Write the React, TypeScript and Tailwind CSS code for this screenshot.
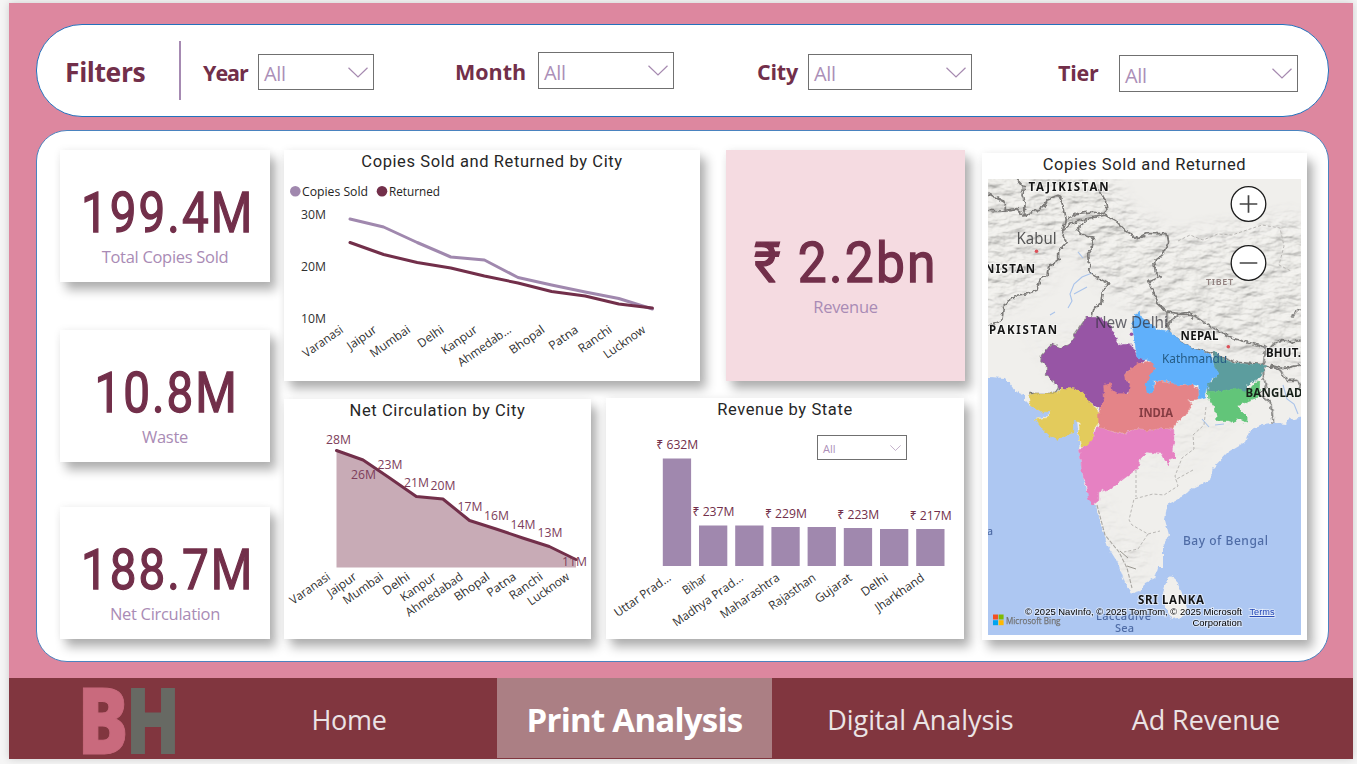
import React from "react";

const SEGOE = "font-['Open_Sans','Noto_Sans',sans-serif]";
const SHADOW = "shadow-[6px_8px_10px_rgba(0,0,0,0.3),0_0_8px_rgba(0,0,0,0.06)]";

type Point = [number, number];
const line = (pts: Point[]) => pts.map((p) => p.join(",")).join(" ");

function Chevron({ className }: { className: string }) {
  return (
    <svg viewBox="0 0 20 11" className={className} fill="none" stroke="#a68ab0" strokeWidth="1.2">
      <path d="M0.5 0.7 L10 10 L19.5 0.7" />
    </svg>
  );
}

function Filter({ label, labelClass, boxClass }: { label: string; labelClass: string; boxClass: string }) {
  return (
    <div className="flex items-start">
      <span className={`text-[21.5px] font-bold leading-[30px] text-[#722f4a] ${labelClass}`}>{label}</span>
      <button className={`flex items-center justify-between border border-[#707070] bg-white pr-[5px] pl-[5px] ${boxClass}`}>
        <span className="pt-[4px] text-[20px] leading-[30px] font-normal tracking-[-0.3px] text-[#ac8fb8]">All</span>
        <Chevron className="h-[11px] w-[20px]" />
      </button>
    </div>
  );
}

function Kpi({ value, label }: { value: string; label: string }) {
  return (
    <div className={`flex h-[132px] w-[210px] flex-col items-center bg-white pt-[32px] ${SHADOW}`}>
      <div className="scale-x-[0.85] pl-[5px] font-[Roboto,sans-serif] text-[56px] leading-[62px] font-normal tracking-[2.4px] whitespace-nowrap text-[#722f4a] [-webkit-text-stroke:1.3px_#722f4a]">
        {value}
      </div>
      <div className="mt-px text-[16.5px] leading-[24px] tracking-[-0.3px] text-[#a98bb5]">{label}</div>
    </div>
  );
}

function Title({ children, className = "" }: { children: React.ReactNode; className?: string }) {
  return (
    <h2 className={`pt-px text-center font-[Roboto,sans-serif] text-[16.5px] leading-[21px] tracking-[0.6px] whitespace-nowrap text-[#262626] ${className}`}>
      {children}
    </h2>
  );
}

function AxisLabel({ x, y, w, children }: { x: number; y: number; w: number; children: string }) {
  return (
    <text x={x} y={y} transform={`rotate(-35 ${x} ${y})`} textAnchor="end" textLength={w} lengthAdjust="spacingAndGlyphs" fontSize="12" fill="#303030">
      {children}
    </text>
  );
}

const SOLD = [219, 227, 242.5, 257, 260, 277.5, 285, 292, 298.5, 309];
const RETURNED = [242.5, 254.5, 262.5, 268, 276, 283, 291.5, 296, 304, 308];
const LINE_CITIES: [string, number][] = [
  ["Varanasi", 46], ["Jaipur", 33], ["Mumbai", 46], ["Delhi", 29], ["Kanpur", 41],
  ["Ahmedab...", 62], ["Bhopal", 40], ["Patna", 33], ["Ranchi", 38], ["Lucknow", 48],
];

function LineChart() {
  const x = (i: number) => 350 + i * 33.6;
  return (
    <svg viewBox="284 172 416 209" className="h-[209px] w-[416px]">
      <circle cx="295.3" cy="191.2" r="5.3" fill="#a088ae" />
      <text x="302" y="196" fontSize="12.5" textLength="66" lengthAdjust="spacingAndGlyphs" fill="#252423">Copies Sold</text>
      <circle cx="382" cy="191.2" r="5.3" fill="#722f4a" />
      <text x="389" y="196" fontSize="12.5" textLength="51" lengthAdjust="spacingAndGlyphs" fill="#252423">Returned</text>
      {["30M", "20M", "10M"].map((t, i) => (
        <text key={t} x="301" y={219 + i * 52} fontSize="12.5" textLength="25" lengthAdjust="spacingAndGlyphs" fill="#303030">{t}</text>
      ))}
      <g fill="none" strokeWidth="3" strokeLinecap="round" strokeLinejoin="round">
        <polyline stroke="#a088ae" points={line(SOLD.map((y, i) => [x(i), y]))} />
        <polyline stroke="#722f4a" points={line(RETURNED.map((y, i) => [x(i), y]))} />
      </g>
      {LINE_CITIES.map(([c, w], i) => (
        <AxisLabel key={c} x={x(i) - 6} y={331.5} w={w}>{c}</AxisLabel>
      ))}
    </svg>
  );
}

const NET = [450.5, 460, 478, 496.5, 499, 520.5, 529, 538, 546.5, 559.5];
const NET_LABELS: [string, number, number][] = [
  ["28M", 338.5, 444], ["26M", 363.5, 479], ["23M", 390, 469], ["21M", 416.5, 487], ["20M", 443, 490],
  ["17M", 470, 511], ["16M", 496.5, 520], ["14M", 523, 529], ["13M", 550, 537], ["11M", 574.5, 566],
];
const NET_CITIES: [string, number][] = [
  ["Varanasi", 46], ["Jaipur", 33], ["Mumbai", 46], ["Delhi", 30], ["Kanpur", 41],
  ["Ahmedabad", 67], ["Bhopal", 40], ["Patna", 33], ["Ranchi", 38], ["Lucknow", 48],
];

function AreaChart() {
  const x = (i: number) => 336.5 + i * 26.6;
  const pts = NET.map((y, i): Point => [x(i), y]);
  return (
    <svg viewBox="284 421 307 218" className="h-[218px] w-[307px]">
      <polygon points={`336.5,567.5 ${line(pts)} 576,567.5`} fill="#c8abb6" />
      <polyline points={line(pts)} fill="none" stroke="#722f4a" strokeWidth="3" strokeLinecap="round" strokeLinejoin="round" />
      {NET_LABELS.map(([t, lx, ly]) => (
        <text key={t} x={lx} y={ly} textAnchor="middle" fontSize="12.5" textLength="25" lengthAdjust="spacingAndGlyphs" fill="#7d3d5a">{t}</text>
      ))}
      {NET_CITIES.map(([c, w], i) => (
        <AxisLabel key={c} x={x(i) - 5.5} y={578.5} w={w}>{c}</AxisLabel>
      ))}
    </svg>
  );
}

const STATES: [string, number, number, string?][] = [
  ["Uttar Prad...", 458.5, 66, "₹ 632M"], ["Bihar", 525.5, 27, "₹ 237M"], ["Madhya Prad...", 525.5, 83],
  ["Maharashtra", 527, 69, "₹ 229M"], ["Rajasthan", 527, 54], ["Gujarat", 528, 42, "₹ 223M"],
  ["Delhi", 529, 30], ["Jharkhand", 529, 57, "₹ 217M"],
];

function BarChart() {
  return (
    <svg viewBox="606 419 358 220" className="h-[220px] w-[358px]">
      {STATES.map(([name, top, w, value], i) => {
        const x = 662.8 + i * 36.2;
        return (
          <g key={name}>
            <rect x={x} y={top} width="28.3" height={566 - top} fill="#a088ae" />
            {value && (
              <text x={x + 14.5} y={top - 9.5} textAnchor="middle" fontSize="12.5" textLength="42" lengthAdjust="spacingAndGlyphs" fill="#722f4a">{value}</text>
            )}
            <AxisLabel x={x + 9} y={579.5} w={w}>{name}</AxisLabel>
          </g>
        );
      })}
    </svg>
  );
}

const LAND =
  "M988 179 H1301 V415 L1296 421 1290 418 1286 424 1277 423 1263 425 1250 430 1245 442 1228 452 1213 468 1210 480 1193 488 1180 498 1167 505 1165 520 1169 535 1163 547 1163 567 1158 567 1155 578 1145 583 1140 592 1133 594 1125 583 1118 563 1108 547 1102 527 1095 505 1092 503 1086 490 1082 472 1080 455 1079 438 1077 420 1073 420 1072 433 1057 439 1042 428 1035 419 1048 416 1051 411 1040 412 1030 405 1025 400 1025 395 1015 391 1005 378 988 377Z";

function IndiaMap() {
  return (
    <svg viewBox="988 179 313 456" className="h-[456px] w-[313px] shrink-0 overflow-hidden">
      <defs>
        <filter id="rough" x="-5%" y="-5%" width="110%" height="110%">
          <feTurbulence type="fractalNoise" baseFrequency="0.22" numOctaves="2" seed="4" />
          <feDisplacementMap in="SourceGraphic" scale="5" xChannelSelector="R" yChannelSelector="G" />
        </filter>
        <filter id="relief" x="0" y="0" width="100%" height="100%">
          <feTurbulence type="fractalNoise" baseFrequency="0.05 0.1" numOctaves="4" seed="11" />
          <feColorMatrix values="0 0 0 0 0 0 0 0 0 0 0 0 0 0 0 1 0 0 0 0" />
          <feDiffuseLighting surfaceScale="3.4" diffuseConstant="1.04" lightingColor="#f0efec">
            <feDistantLight azimuth="235" elevation="64" />
          </feDiffuseLighting>
        </filter>
        <filter id="soft"><feGaussianBlur stdDeviation="8" /></filter>
        <clipPath id="land"><path d={LAND} /></clipPath>
        <mask id="mountains">
          <g filter="url(#soft)" fill="#fff">
            <path d="M970 160 H1105 L1125 205 1175 235 1290 215 1320 230 V375 L1240 355 1150 325 1110 290 1060 240 1050 280 1010 310 970 320Z" opacity="0.9" />
            <path d="M1092 495 L1104 500 1122 545 1148 540 1137 590Z" opacity="0.5" />
            <path d="M1020 325 H1100 L1180 400 1250 400 1190 470 1110 470Z" opacity="0.15" />
          </g>
        </mask>
      </defs>
      <rect x="988" y="179" width="313" height="456" fill="#adc7f2" />
      <g filter="url(#rough)">
        <path d={LAND} fill="#f0efec" />
        <path d="M1170 576 L1175 578 1182 593 1187 607 1183 617 1172 619 1165 608 1163 593 1167 580Z" fill="#f0efec" />
      </g>
      <path d="M988 179h313v230h-3v-227h-307v190h-3z" fill="#f0efec" />
      <g clipPath="url(#land)">
        <g mask="url(#mountains)">
          <rect x="988" y="179" width="313" height="456" filter="url(#relief)" />
        </g>
      </g>
      <path d="M1068 308 L1072 301 1070 294 1074 284 1082 277 1092 273 M1074 294 L1087 287 M1078 252 L1083 258 M1283 385 L1287 399 1294 404 1298 414 M1202 419 L1209 427 M1215 425 l9 -1 M1050 315 l5 -3" fill="none" stroke="#a9c3ea" strokeWidth="1.1" />
      <g filter="url(#rough)" fill="none" stroke="#7b7a78" strokeLinejoin="round">
        <g transform="translate(980.3 145.3) scale(0.33333)" strokeWidth="5">
          <path d="M24 195 L60 197 110 190 130 212 160 200 190 185 200 165 235 150 245 170 255 225 290 205 330 200 370 205 380 195 375 165 355 130" />
          <path d="M130 212 L135 175 125 150 130 125 110 102 M24 145 L75 170 75 195" />
          <path d="M255 225 L245 260 258 290 235 320 235 345 205 365 200 390 180 400 170 435 140 445 110 450 70 480 65 525 40 535 24 540" />
          <path d="M245 260 L270 235 320 220 375 210 410 230 440 260 470 280 500 265 560 265 565 290 545 330 520 350 525 380 540 395 505 410 520 440 530 475 560 500 600 505 630 500 640 520" />
          <path d="M320 225 L290 250 300 265 340 280 335 310 325 325 330 385 385 415 370 430 365 470 340 490 335 515 320 520" />
        </g>
        <g transform="translate(980.3 305.3) scale(0.33333)" strokeWidth="5">
          <path d="M320 36 L290 80 270 118 240 128 215 118 185 150 183 165 200 180 200 210 222 225 235 248 225 265 150 265" />
          <path d="M560 60 L570 85 600 110 640 130 690 140 760 170 850 178 855 125 800 110 760 100 700 70 640 30 590 30 560 60 560 20" />
          <path d="M855 150 L880 115 900 105 935 110 963 105 M870 180 L910 190 963 178 M850 178 L850 215 860 250 835 265 870 290 880 355 M855 180 L900 195 920 225 950 225 M950 225 L963 245 M935 40 Q945 10 963 15" />
        </g>
      </g>
      <g fill="none" stroke="#b9b7b4" strokeWidth="1" strokeDasharray="3 2">
        <path d="M1178 241 L1190 235 1203 240 1218 234 1232 235 1250 229 1262 225 1280 228 1284 246 1279 265 1291 271" />
        <path d="M1206 407 L1204 425 1193 435 1194 449 1182 458 1175 476 1178 486 1164 495 1153 494 1134 499 1129 520 1132 525 1148 534 1160 531 M1136 465 L1136 497 M1148 534 L1138 549 1124 552 M1193 470 L1175 480" />
      </g>
      <path d="M1097 505 L1105 535 1119 552 1127 568 1132 588" fill="none" stroke="#aaa8a3" strokeWidth="1.1" strokeDasharray="4 1.5" />
      <path d="M1120 551 l8 7 M1127 566 l9 3" stroke="#999790" fill="none" />
      <g filter="url(#rough)">
        <g transform="translate(980.4 305.4) scale(0.33333)" strokeWidth="2" strokeLinejoin="round">
          <path fill="#9755a5" stroke="#9755a5" d="M320 36 L358 36 390 60 400 85 415 120 450 115 460 130 470 155 495 162 435 200 435 225 455 235 440 265 410 270 370 290 360 310 325 290 310 262 280 250 235 248 222 225 200 210 200 180 183 165 185 150 215 118 240 128 270 118 290 80Z" />
          <path fill="#e3cb5b" stroke="#e3cb5b" d="M145 270 L165 264 230 265 240 250 280 250 310 262 325 290 357 318 355 350 340 370 340 400 320 425 303 425 298 400 298 350 280 345 280 380 230 402 205 390 185 370 165 342 205 337 212 318 180 320 150 300Z" />
          <path fill="#e681c2" stroke="#e681c2" d="M350 365 L425 388 460 372 500 377 545 370 580 372 580 410 575 435 587 455 570 460 565 478 553 460 545 445 500 440 480 460 470 490 430 520 395 548 355 560 355 585 340 597 325 585 318 540 305 500 298 430 318 425 340 400 345 375Z" />
          <path fill="#e48488" stroke="#e48488" d="M515 165 L525 180 520 205 505 225 500 262 518 262 525 228 560 228 600 240 630 235 655 255 655 280 620 285 635 300 615 330 590 345 580 370 545 368 500 375 460 370 425 385 390 375 355 365 355 330 365 300 372 280 370 240 390 235 395 255 410 265 445 265 450 230 435 225 432 205 470 175Z" />
          <path fill="#60b0fb" stroke="#60b0fb" d="M475 20 L482 35 500 50 530 70 570 80 600 110 640 130 690 145 702 180 718 205 690 225 680 250 675 275 657 280 655 240 620 235 590 238 560 225 520 225 518 262 500 262 497 235 510 210 525 190 515 165 490 160 470 155 465 120 462 95 455 65 465 30Z" />
          <path fill="#5b9d9e" stroke="#5b9d9e" d="M700 140 L730 160 760 175 855 178 840 215 800 240 800 262 760 250 720 258 683 258 685 235 718 205 702 180Z" />
          <path fill="#62c579" stroke="#62c579" d="M683 258 L720 258 770 248 800 260 830 225 838 230 835 275 805 285 770 305 800 335 800 350 770 340 760 352 740 345 710 345 705 310 685 280Z" />
        </g>
      </g>
      <circle cx="1036.5" cy="251.2" r="1.8" fill="#dc5058" />
      <circle cx="1228.3" cy="346.8" r="1.8" fill="#dc5058" />
      <circle cx="1131.5" cy="334.3" r="1.8" fill="#9755a5" />
      <g className="font-['Noto_Sans',sans-serif]">
        <g fontSize="11.5" fontWeight="700" fill="#151515" stroke="#fff" strokeOpacity="0.55" strokeWidth="2" paintOrder="stroke">
          <text x="1028.5" y="191" textLength="80">TAJIKISTAN</text>
          <text x="985" y="273" textLength="50">NISTAN</text>
          <text x="989" y="333.5" textLength="68">PAKISTAN</text>
          <text x="1180.5" y="339.5" textLength="38">NEPAL</text>
          <text x="1266" y="356.5" textLength="35">BHUT.</text>
          <text x="1138" y="604" textLength="66">SRI LANKA</text>
        </g>
        <text x="1245.5" y="396.5" fontSize="11.5" fontWeight="700" textLength="57" fill="#172019">BANGLAD</text>
        <text x="1139" y="417" fontSize="11.5" fontWeight="700" textLength="34" lengthAdjust="spacingAndGlyphs" fill="#853c42">INDIA</text>
        <text x="1206" y="285" fontSize="9" fontWeight="600" textLength="27" fill="#91817f">TIBET</text>
        <text x="1016.5" y="244" fontSize="15.5" textLength="40" lengthAdjust="spacingAndGlyphs" fill="#555">Kabul</text>
        <text x="1095" y="328" fontSize="15.5" textLength="73" lengthAdjust="spacingAndGlyphs" fill="#30303a" fillOpacity="0.72">New Delhi</text>
        <text x="1162" y="362.5" fontSize="12.5" textLength="65" lengthAdjust="spacingAndGlyphs" fill="#255b84">Kathmandu</text>
        <g fill="#4f6ca6" fontSize="12" fontWeight="500">
          <text x="1183" y="545" textLength="85">Bay of Bengal</text>
          <text x="1096" y="620" fontSize="11" textLength="55">Laccadive</text>
          <text x="1115" y="631.5" fontSize="11" textLength="19">Sea</text>
          <text x="987" y="535" fontSize="10.5">a</text>
        </g>
      </g>
      <path fill="#f25022" d="M993 614.5h5v5h-5z" />
      <path fill="#7fba00" d="M998.6 614.5h5v5h-5z" />
      <path fill="#00a4ef" d="M993 620.2h5v5h-5z" />
      <path fill="#ffb900" d="M998.6 620.2h5v5h-5z" />
      <text x="1006" y="623.5" fontSize="9" textLength="54.5" lengthAdjust="spacingAndGlyphs" fill="#737373" stroke="#737373" strokeWidth="0.25">Microsoft Bing</text>
      <g className="font-['Liberation_Sans',sans-serif]" fontSize="9.6" fill="#000" stroke="#fff" strokeOpacity="0.5" strokeWidth="2" paintOrder="stroke">
        <text x="1025" y="615" textLength="217" lengthAdjust="spacingAndGlyphs">© 2025 NavInfo, © 2025 TomTom, © 2025 Microsoft</text>
        <text x="1192.5" y="626" textLength="49.5" lengthAdjust="spacingAndGlyphs">Corporation</text>
        <text x="1249.5" y="615" textLength="25" lengthAdjust="spacingAndGlyphs" fill="#2447b5" textDecoration="underline">Terms</text>
      </g>
      <g fill="#fff" stroke="#1c1c1c" strokeWidth="1.3">
        <circle cx="1248.5" cy="204" r="17.3" />
        <circle cx="1248.5" cy="263" r="17.3" />
        <path d="M1239.7 204h17.6M1248.5 195.2v17.6M1239.7 263h17.6" stroke="#444" strokeWidth="1.7" />
      </g>
    </svg>
  );
}

function NavItem({ label, className }: { label: string; className: string }) {
  return <a className={`flex h-[80px] items-center justify-center pt-[4px] whitespace-nowrap ${className}`}>{label}</a>;
}

export default function App() {
  return (
    <div className={`h-[764px] w-[1357px] overflow-hidden bg-[#f5f5f5] pt-[3px] pl-[9px] ${SEGOE}`}>
      <div className="flex h-[756px] w-[1344px] flex-col bg-[#dd879f] shadow-[0_0_8px_rgba(0,0,0,0.16)]">
        <header className="mt-[21px] ml-[27px] flex h-[93px] w-[1293px] shrink-0 items-start rounded-[46px] border border-[#2372bd] bg-white">
          <h1 className="mt-[29px] ml-[28px] w-[114px] text-[26.5px] leading-[36px] font-bold tracking-[-0.4px] text-[#722f4a]">Filters</h1>
          <div className="mt-[16px] h-[59px] w-[2px] bg-[#a68ab2]" />
          <div className="mt-[27px] ml-[22px] flex">
            <Filter label="Year" labelClass="mt-[6px] w-[55px] tracking-[-1px]" boxClass="mt-[2px] h-[36px] w-[116px]" />
            <div className="ml-[81px] flex">
              <Filter label="Month" labelClass="mt-[5px] w-[83px]" boxClass="h-[37px] w-[136px]" />
            </div>
            <div className="ml-[83px] flex">
              <Filter label="City" labelClass="mt-[5px] w-[51px] tracking-[-0.2px]" boxClass="mt-[2px] h-[36px] w-[164px]" />
            </div>
            <div className="ml-[86px] flex">
              <Filter label="Tier" labelClass="mt-[6px] w-[61px] tracking-[-0.2px]" boxClass="mt-[3px] h-[37px] w-[179px]" />
            </div>
          </div>
        </header>
        <main className="mt-[13px] ml-[27px] flex h-[532px] w-[1293px] shrink-0 rounded-[31px] border border-[#4a83bf] bg-white pt-[19px] pl-[23px]">
          <section className="flex w-[210px] shrink-0 flex-col">
            <Kpi value="199.4M" label="Total Copies Sold" />
            <div className="h-[48px]" />
            <Kpi value="10.8M" label="Waste" />
            <div className="h-[45px]" />
            <Kpi value="188.7M" label="Net Circulation" />
          </section>
          <section className="ml-[14px] w-[681px] shrink-0">
            <div className="flex gap-[26px]">
              <article className={`h-[231px] w-[416px] bg-white ${SHADOW}`}>
                <Title>Copies Sold and Returned by City</Title>
                <LineChart />
              </article>
              <article className={`flex h-[231px] w-[239px] flex-col items-center bg-[#f5dbe1] pt-[81px] ${SHADOW}`}>
                <div className="flex origin-center scale-x-[0.92] items-baseline font-[Roboto,'Noto_Sans',sans-serif] text-[56px] leading-[64px] font-normal tracking-[2.4px] whitespace-nowrap text-[#722f4a] [-webkit-text-stroke:1.3px_#722f4a]">
                  ₹ 2.2bn
                </div>
                <div className="text-[16.5px] leading-[24px] tracking-[-0.3px] text-[#a98bb5]">Revenue</div>
              </article>
            </div>
            <div className="mt-[17px] flex gap-[15px]">
              <article className={`mt-px h-[240px] w-[307px] bg-white ${SHADOW}`}>
                <Title>Net Circulation by City</Title>
                <AreaChart />
              </article>
              <article className={`relative h-[241px] w-[358px] bg-white ${SHADOW}`}>
                <Title className="h-[21px]">Revenue by State</Title>
                <BarChart />
                <button className="absolute top-[37px] left-[211px] flex h-[25px] w-[90px] items-center justify-between border border-[#707070] bg-white px-[5px]">
                  <span className="pt-[3px] text-[11px] font-normal text-[#ac8fb8]">All</span>
                  <Chevron className="h-[6px] w-[11px]" />
                </button>
              </article>
            </div>
          </section>
          <article className={`mt-[3px] ml-[17px] flex h-[487px] w-[325px] shrink-0 flex-col items-center bg-white ${SHADOW}`}>
            <Title className="h-[26px]">Copies Sold and Returned</Title>
            <IndiaMap />
          </article>
        </main>
        <nav className="mt-[16px] flex h-[81px] w-full shrink-0 bg-[#81363f] text-[27px] text-[#ebe3e5]">
          <svg viewBox="9 678 200 81" className="h-[81px] w-[200px] shrink-0 font-['Open_Sans',sans-serif]" fontSize="93" fontWeight="800">
            <text x="77.5" y="753.5" textLength="51" lengthAdjust="spacingAndGlyphs" fill="#c96a7d" stroke="#c96a7d" strokeWidth="1">B</text>
            <text x="125.5" y="753.5" textLength="55" lengthAdjust="spacingAndGlyphs" fill="#676963">H</text>
          </svg>
          <NavItem label="Home" className="w-[280px] tracking-[-0.3px]" />
          <NavItem label="Print Analysis" className="ml-[8px] w-[275px] bg-[#ab7f84] text-[33px] font-bold tracking-[-0.75px] text-white" />
          <NavItem label="Digital Analysis" className="w-[297px] tracking-[-0.1px]" />
          <NavItem label="Ad Revenue" className="w-[274px] tracking-[-0.1px]" />
        </nav>
      </div>
    </div>
  );
}
